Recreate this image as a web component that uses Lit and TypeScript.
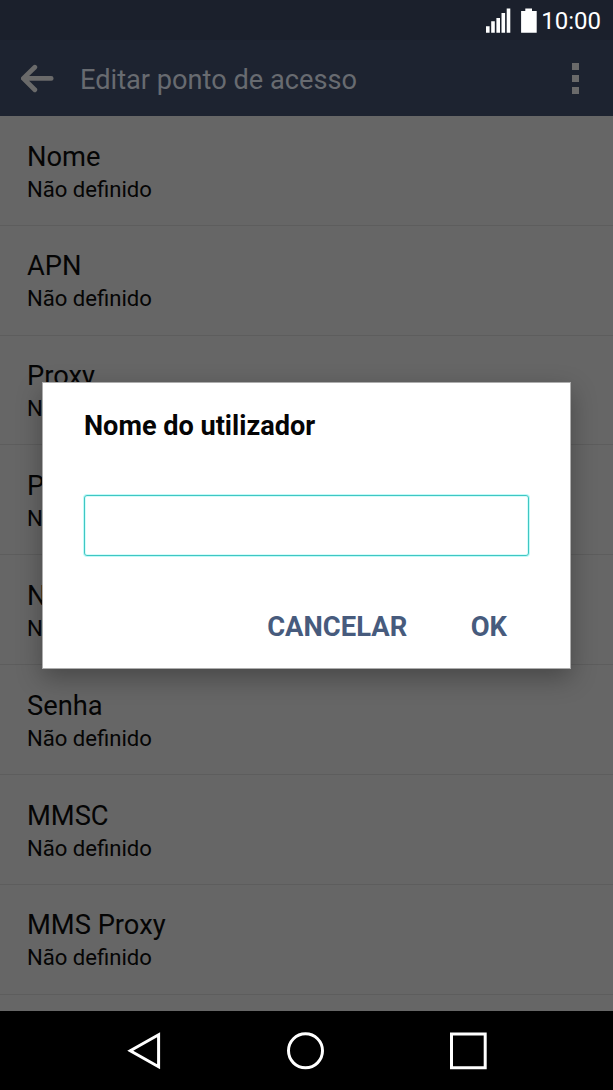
import { LitElement, html, css } from "lit";
import { customElement, property } from "lit/decorators.js";

@customElement("setting-row")
class SettingRow extends LitElement {
  @property() label = "";
  @property() value = "";

  static styles = css`
    :host {
      display: block;
      box-sizing: border-box;
      flex: none;
      height: 109.83px;
      padding: 23.6px 27px 0;
      border-bottom: 1px solid #5d5d5d;
      color: #050505;
      white-space: nowrap;
    }
    .label { font-size: 27.3px; line-height: 34px; }
    .value { font-size: 22.1px; line-height: 31.6px; }
  `;

  render() {
    return html`
      <div class="label">${this.label}</div>
      <div class="value">${this.value}</div>
    `;
  }
}

@customElement("app-root")
class AppRoot extends LitElement {
  static styles = css`
    :host {
      display: flex;
      flex-direction: column;
      position: relative;
      width: 613px;
      height: 1090px;
      overflow: hidden;
      font-family: Roboto, sans-serif;
      background: #666;
    }
    svg { display: block; flex: none; }
    .status {
      flex: none;
      display: flex;
      justify-content: flex-end;
      height: 40px;
      box-sizing: border-box;
      padding-right: 12px;
      background: #1b202c;
      color: #fff;
    }
    .clock { font-size: 24px; line-height: 43px; margin-left: 3px; }
    .bar {
      flex: none;
      display: flex;
      align-items: center;
      height: 75.6px;
      box-sizing: border-box;
      padding: 0 34px 0 21px;
      background: #1d2330;
      color: #686b70;
    }
    .title { flex: 1; margin-left: 26px; font-size: 27.2px; line-height: 36px; padding-top: 4px; white-space: nowrap; }
    .list { flex: 1; min-height: 0; display: flex; flex-direction: column; overflow: hidden; padding-top: 0.4px; }
    .nav {
      flex: none;
      height: 79px;
      background: #000;
    }
    .dialog {
      position: absolute;
      left: 42px;
      top: 382px;
      width: 529px;
      height: 287px;
      box-sizing: border-box;
      padding: 25px 41px 0;
      display: flex;
      flex-direction: column;
      background: #fff;
      border: 1px solid #adadad;
      box-shadow: 0 9px 24px rgba(0, 0, 0, 0.3);
    }
    .heading { margin: 0; font-size: 27.1px; line-height: 36px; font-weight: 700; color: #050505; white-space: nowrap; }
    .field {
      margin-top: 51px;
      height: 61px;
      box-sizing: border-box;
      border: 1px solid #3fc6c3;
      border-radius: 3px;
      box-shadow: 0 0 0 1px rgba(120, 245, 240, 0.45), inset 0 0 0 1px rgba(120, 245, 240, 0.3);
      background: #fff;
      outline: none;
      font: 26px Roboto, sans-serif;
      padding: 0 10px;
    }
    .actions {
      display: flex;
      justify-content: flex-end;
      gap: 63.5px;
      margin-top: 53px;
      padding-right: 22px;
    }
    .action {
      border: 0;
      padding: 0;
      background: none;
      font: 700 27.4px/36px Roboto, sans-serif;
      color: #475b7d;
    }
  `;

  private fields = ["Nome", "APN", "Proxy", "Porta", "Nome do utilizador", "Senha", "MMSC", "MMS Proxy"];

  render() {
    return html`
      <div class="status">
        <svg width="52" height="40" viewBox="486 0 52 40" fill="#fff">
          <path d="M486 26.3h3.6v6.4H486zM491.2 21.2h3.6v11.5h-3.6zM496.4 18h3.6v14.7h-3.6zM501.5 13h3.6v19.7h-3.6zM506.7 8.6h3.6v24.1h-3.6z" />
          <path d="M525.3 8.6h6.7v2.3h4.7v21.8h-15.6V10.9h4.2z" />
        </svg>
        <span class="clock">10:00</span>
      </div>
      <div class="bar">
        <svg width="33" height="30" viewBox="21 63 33 30" fill="none" stroke="#6a6a6a" stroke-width="4.8" stroke-linecap="round" stroke-linejoin="round">
          <path d="M51.2 78.4H23.8M34.8 67.2L23.3 78.4l11.5 11.4" />
        </svg>
        <span class="title">Editar ponto de acesso</span>
        <svg width="7" height="32" viewBox="572 62 7 32" fill="#6a6a6a">
          <path d="M572 63h7v7h-7zM572 75h7v7h-7zM572 87h7v7h-7z" />
        </svg>
      </div>
      <div class="list">
        ${this.fields.map((f) => html`<setting-row label=${f} value="Não definido"></setting-row>`)}
      </div>
      <div class="nav">
        <svg width="613" height="79" viewBox="0 1011 613 79" fill="none" stroke="#fff" stroke-width="3">
          <path d="M158.6 1034.8v32L130.3 1050.8z" />
          <circle cx="305.5" cy="1050.8" r="17" />
          <path d="M451.5 1034h33.7v33.7h-33.7z" />
        </svg>
      </div>
      <div class="dialog">
        <h2 class="heading">Nome do utilizador</h2>
        <input class="field" />
        <div class="actions">
          <button class="action">CANCELAR</button>
          <button class="action">OK</button>
        </div>
      </div>
    `;
  }
}
